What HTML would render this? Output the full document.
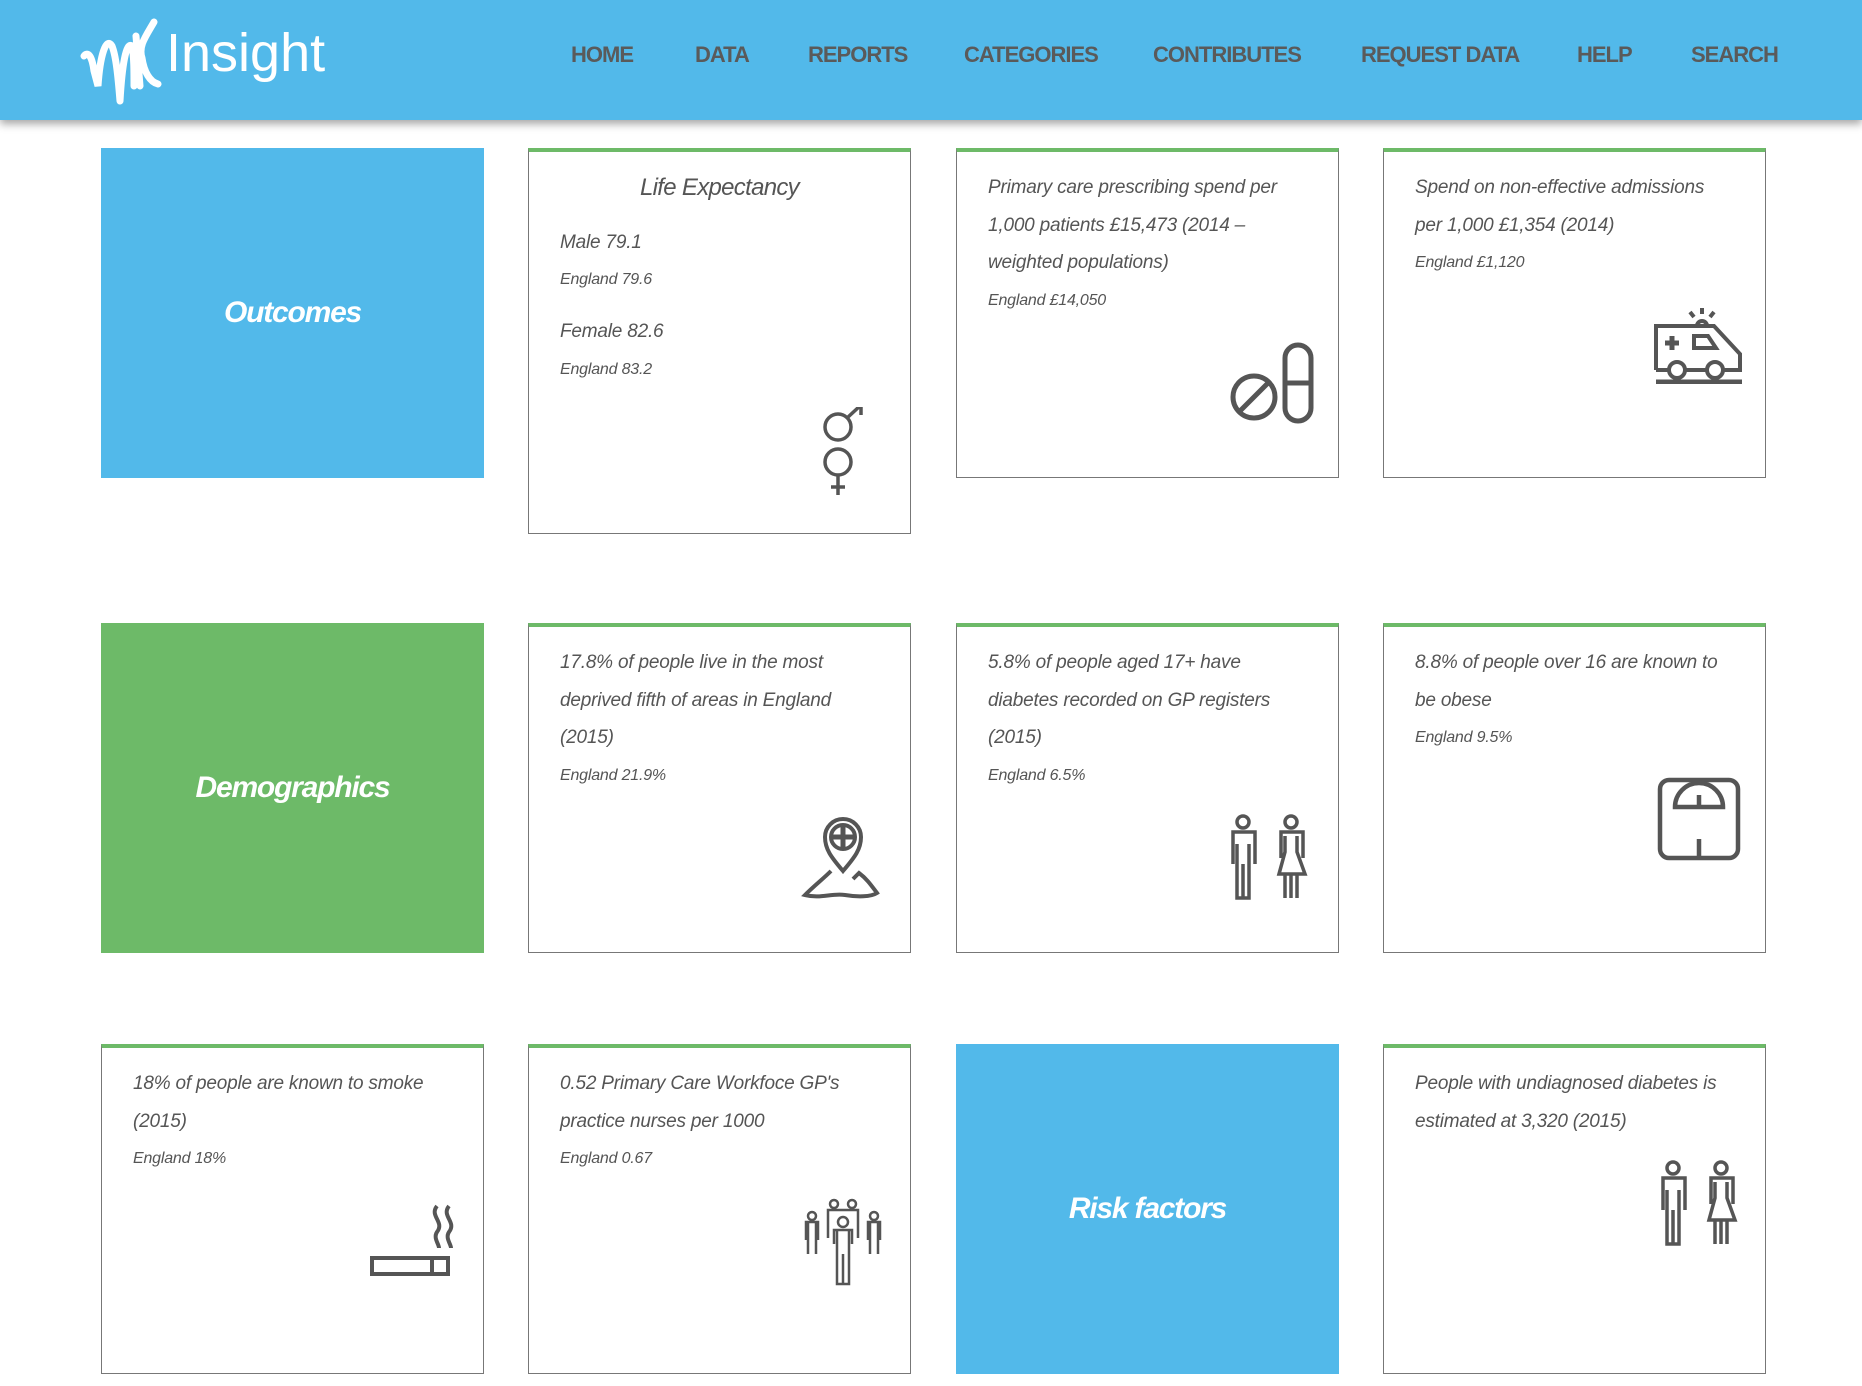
<!DOCTYPE html>
<html><head><meta charset="utf-8"><style>
*{margin:0;padding:0;box-sizing:border-box}
body{width:1862px;height:1386px;background:#fff;font-family:"Liberation Sans",sans-serif;position:relative;overflow:hidden;color:#555}
.hdr{position:absolute;left:0;top:0;width:1862px;height:120px;background:#52b9ea;box-shadow:0 4px 8px rgba(0,0,0,.35)}
.logo{position:absolute;left:80px;top:16px;color:#fff;font-size:54px;white-space:nowrap}
.logo span{position:absolute;left:86px;top:6px}
.nav{position:absolute;top:42px;font-size:22px;font-weight:bold;color:#5a5a5a;letter-spacing:-1px}
.tile{position:absolute;width:383px;color:#fff;font-style:italic;font-weight:bold;font-size:30px;display:flex;align-items:center;justify-content:center;letter-spacing:-1.2px}
.card{position:absolute;width:383px;border:1px solid #777;border-top:4px solid #6dba68;padding:17px 36px 0 31px;font-style:italic;font-size:19px;line-height:37.5px;color:#555;letter-spacing:-0.2px}
.card .e{font-size:16px;line-height:38px}
.card svg{position:absolute}
</style></head><body>
<div class="hdr">
<div class="logo"><svg width="90" height="90" viewBox="0 0 90 90" style="position:absolute;left:0;top:0"><path d="M4 40 C8 35 12 40 14 55 L18 70 C20 40 26 20 32 30 C36 40 38 60 40 85 M40 85 C42 50 46 25 52 30 C54 40 54 55 54 70 M56 20 L60 70 M74 6 C66 20 58 30 62 42 C64 56 70 66 78 68" stroke="#fff" stroke-width="7" fill="none" stroke-linecap="round"/></svg><span>Insight</span></div>
<div class="nav" style="left:571px">HOME</div>
<div class="nav" style="left:695px">DATA</div>
<div class="nav" style="left:808px">REPORTS</div>
<div class="nav" style="left:964px">CATEGORIES</div>
<div class="nav" style="left:1153px">CONTRIBUTES</div>
<div class="nav" style="left:1361px">REQUEST DATA</div>
<div class="nav" style="left:1577px">HELP</div>
<div class="nav" style="left:1691px">SEARCH</div>
</div>

<div class="tile" style="left:101px;top:148px;height:330px;background:#52b9ea">Outcomes</div>
<div class="card" style="left:528px;top:148px;height:386px">
<div style="text-align:center;font-size:24px;margin-left:5px;letter-spacing:-0.7px">Life Expectancy</div>
<div style="margin-top:17px">Male 79.1</div><div class="e">England 79.6</div>
<div style="margin-top:14px">Female 82.6</div><div class="e">England 83.2</div>
<svg style="left:292px;top:255px" width="44" height="92" viewBox="0 0 44 92" fill="none" stroke="#555" stroke-width="3.5"><circle cx="17" cy="20" r="13"/><path d="M26 11 L40 -2 M30 -2 H40 V8"/><circle cx="17" cy="55" r="13"/><path d="M17 68 V88 M10 80 H24"/></svg>
</div>
<div class="card" style="left:956px;top:148px;height:330px">Primary care prescribing spend per 1,000 patients £15,473 (2014 – weighted populations)<div class="e">England £14,050</div>
<svg style="left:272px;top:189px" width="86" height="84" viewBox="0 0 86 84" fill="none" stroke="#555" stroke-width="5"><circle cx="25" cy="56" r="21"/><path d="M11 70 L39 42"/><rect x="56" y="4" width="26" height="76" rx="13"/><path d="M56 42 H82"/></svg>
</div>
<div class="card" style="left:1383px;top:148px;height:330px">Spend on non-effective admissions per 1,000 £1,354 (2014)<div class="e">England £1,120</div>
<svg style="left:270px;top:152px" width="90" height="80" viewBox="0 0 90 80" fill="none" stroke="#555" stroke-width="4"><path d="M48 4 V10 M36 8 L40 13 M60 8 L56 13"/><path d="M43 22 A5 5 0 0 1 53 22"/><path d="M2 66 V22 H60 L86 50 V66 H70 M52 66 H32 M14 66 H2"/><circle cx="23" cy="66" r="8"/><circle cx="61" cy="66" r="8"/><path d="M2 78 H88" stroke-width="5"/><path d="M18 32 V46 M11 39 H25" stroke-width="5"/><path d="M40 32 H54 L62 44 H40 Z"/></svg>
</div>

<div class="tile" style="left:101px;top:623px;height:330px;background:#6dba68">Demographics</div>
<div class="card" style="left:528px;top:623px;height:330px">17.8% of people live in the most deprived fifth of areas in England (2015)<div class="e">England 21.9%</div>
<svg style="left:272px;top:186px" width="80" height="90" viewBox="0 0 80 90" fill="none" stroke="#555" stroke-width="4"><path d="M42 58 C30 44 24 36 24 24 A18 18 0 0 1 60 24 C60 36 54 44 42 58 Z"/><circle cx="42" cy="24" r="12"/><path d="M42 14 V34 M32 24 H52" stroke-width="5"/><path d="M30 58 C22 66 14 72 4 82 C20 86 30 80 44 82 C56 84 70 84 76 80 C70 72 66 66 58 60 L52 66 M36 60" /></svg>
</div>
<div class="card" style="left:956px;top:623px;height:330px">5.8% of people aged 17+ have diabetes recorded on GP registers (2015)<div class="e">England 6.5%</div>
<svg style="left:270px;top:187px" width="84" height="86" viewBox="0 0 84 86" fill="none" stroke="#555" stroke-width="3.5"><circle cx="16" cy="8" r="6"/><path d="M6 50 V18 H28 V50 M10 30 V84 H22 V30 M16 50 V84"/><circle cx="64" cy="8" r="6"/><path d="M54 44 V18 H76 V44 M58 22 V38 L52 60 H78 L70 38 V22 M58 60 V84 M70 60 V84 M64 60 V84"/></svg>
</div>
<div class="card" style="left:1383px;top:623px;height:330px">8.8% of people over 16 are known to be obese<div class="e">England 9.5%</div>
<svg style="left:273px;top:150px" width="86" height="86" viewBox="0 0 86 86" fill="none" stroke="#555" stroke-width="4.5"><rect x="3" y="3" width="78" height="78" rx="9"/><path d="M18 30 A24 24 0 0 1 66 30 Z"/><path d="M42 18 V30 M42 62 V81"/></svg>
</div>

<div class="card" style="left:101px;top:1044px;height:330px">18% of people are known to smoke (2015)<div class="e">England 18%</div>
<svg style="left:267px;top:154px" width="96" height="76" viewBox="0 0 96 76" fill="none" stroke="#555" stroke-width="4"><rect x="3" y="56" width="76" height="16"/><path d="M63 56 V72"/><path d="M68 4 C60 14 76 20 68 30 C64 36 70 42 70 46 M80 4 C72 14 88 20 80 30 C76 36 82 42 82 46"/></svg>
</div>
<div class="card" style="left:528px;top:1044px;height:330px">0.52 Primary Care Workfoce GP's practice nurses per 1000<div class="e">England 0.67</div>
<svg style="left:275px;top:150px" width="78" height="88" viewBox="0 0 78 88" fill="none" stroke="#555" stroke-width="2.5"><circle cx="8" cy="18" r="4"/><path d="M2 42 V24 H14 V42 M4 24 V56 M12 24 V56"/><circle cx="70" cy="18" r="4"/><path d="M64 42 V24 H76 V42 M66 24 V56 M74 24 V56"/><circle cx="30" cy="6" r="4"/><circle cx="48" cy="6" r="4"/><path d="M24 40 V12 H54 V40"/><circle cx="39" cy="24" r="5"/><path d="M30 46 V32 H48 V46 M33 32 V86 H45 V32 M39 56 V86"/></svg>
</div>
<div class="tile" style="left:956px;top:1044px;height:330px;background:#52b9ea">Risk factors</div>
<div class="card" style="left:1383px;top:1044px;height:330px">People with undiagnosed diabetes is estimated at 3,320 (2015)
<svg style="left:273px;top:112px" width="84" height="86" viewBox="0 0 84 86" fill="none" stroke="#555" stroke-width="3.5"><circle cx="16" cy="8" r="6"/><path d="M6 50 V18 H28 V50 M10 30 V84 H22 V30 M16 50 V84"/><circle cx="64" cy="8" r="6"/><path d="M54 44 V18 H76 V44 M58 22 V38 L52 60 H78 L70 38 V22 M58 60 V84 M70 60 V84 M64 60 V84"/></svg>
</div>
</body></html>
